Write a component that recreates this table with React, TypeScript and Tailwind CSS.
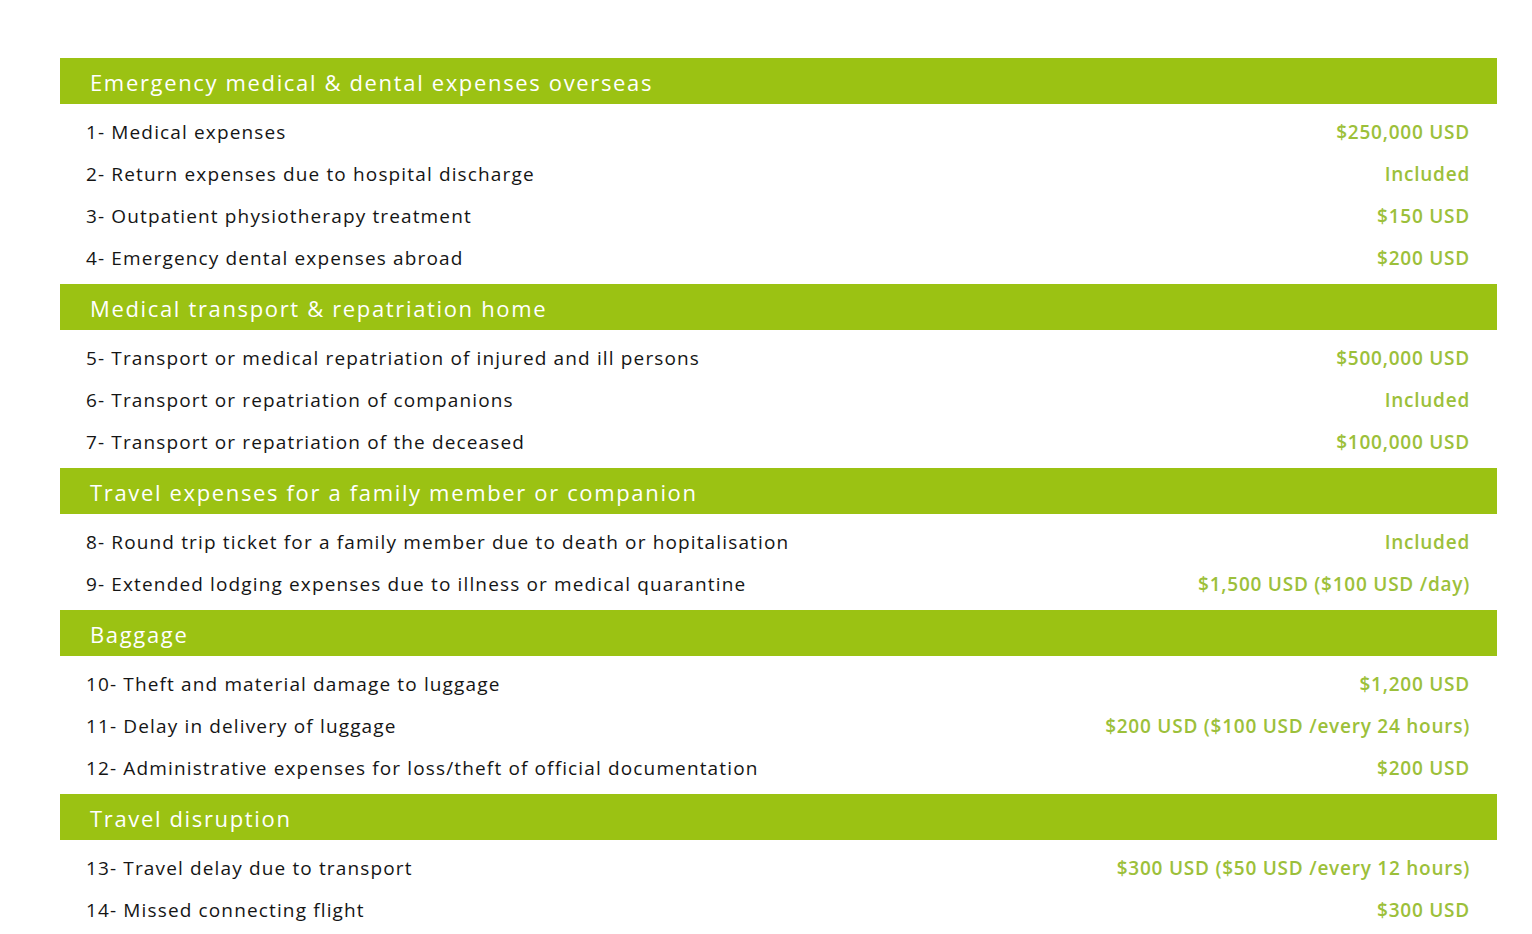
type Row = { label: string; value: string };
type Section = { title: string; rows: Row[] };

const SECTIONS: Section[] = [
  {
    title: "Emergency medical & dental expenses overseas",
    rows: [
      { label: "1- Medical expenses", value: "$250,000 USD" },
      { label: "2- Return expenses due to hospital discharge", value: "Included" },
      { label: "3- Outpatient physiotherapy treatment", value: "$150 USD" },
      { label: "4- Emergency dental expenses abroad", value: "$200 USD" },
    ],
  },
  {
    title: "Medical transport & repatriation home",
    rows: [
      { label: "5- Transport or medical repatriation of injured and ill persons", value: "$500,000 USD" },
      { label: "6- Transport or repatriation of companions", value: "Included" },
      { label: "7- Transport or repatriation of the deceased", value: "$100,000 USD" },
    ],
  },
  {
    title: "Travel expenses for a family member or companion",
    rows: [
      { label: "8- Round trip ticket for a family member due to death or hopitalisation", value: "Included" },
      { label: "9- Extended lodging expenses due to illness or medical quarantine", value: "$1,500 USD ($100 USD /day)" },
    ],
  },
  {
    title: "Baggage",
    rows: [
      { label: "10- Theft and material damage to luggage", value: "$1,200 USD" },
      { label: "11- Delay in delivery of luggage", value: "$200 USD ($100 USD /every 24 hours)" },
      { label: "12- Administrative expenses for loss/theft of official documentation", value: "$200 USD" },
    ],
  },
  {
    title: "Travel disruption",
    rows: [
      { label: "13- Travel delay due to transport", value: "$300 USD ($50 USD /every 12 hours)" },
      { label: "14- Missed connecting flight", value: "$300 USD" },
    ],
  },
];

export default function App() {
  return (
    <div className="min-h-screen bg-white pt-[58px] pl-[60px] pr-[35px] font-['Open_Sans',sans-serif]">
      {SECTIONS.map((section) => (
        <div key={section.title}>
          <div className="flex h-[46px] items-center bg-[#9bc213] pl-[30px] pt-[2px] text-[22px] font-medium tracking-[0.075em] text-white">
            {section.title}
          </div>
          <div className="pt-[7px] pb-[5px]">
            {section.rows.map((row) => (
              <div
                key={row.label}
                className="flex h-[42px] items-center justify-between pl-[26px] pr-[27px] text-[19px]"
              >
                <span className="tracking-[0.06em] text-[#151515]">{row.label}</span>
                <span className="font-semibold tracking-[0.04em] text-[#9cc03a]">{row.value}</span>
              </div>
            ))}
          </div>
        </div>
      ))}
    </div>
  );
}
